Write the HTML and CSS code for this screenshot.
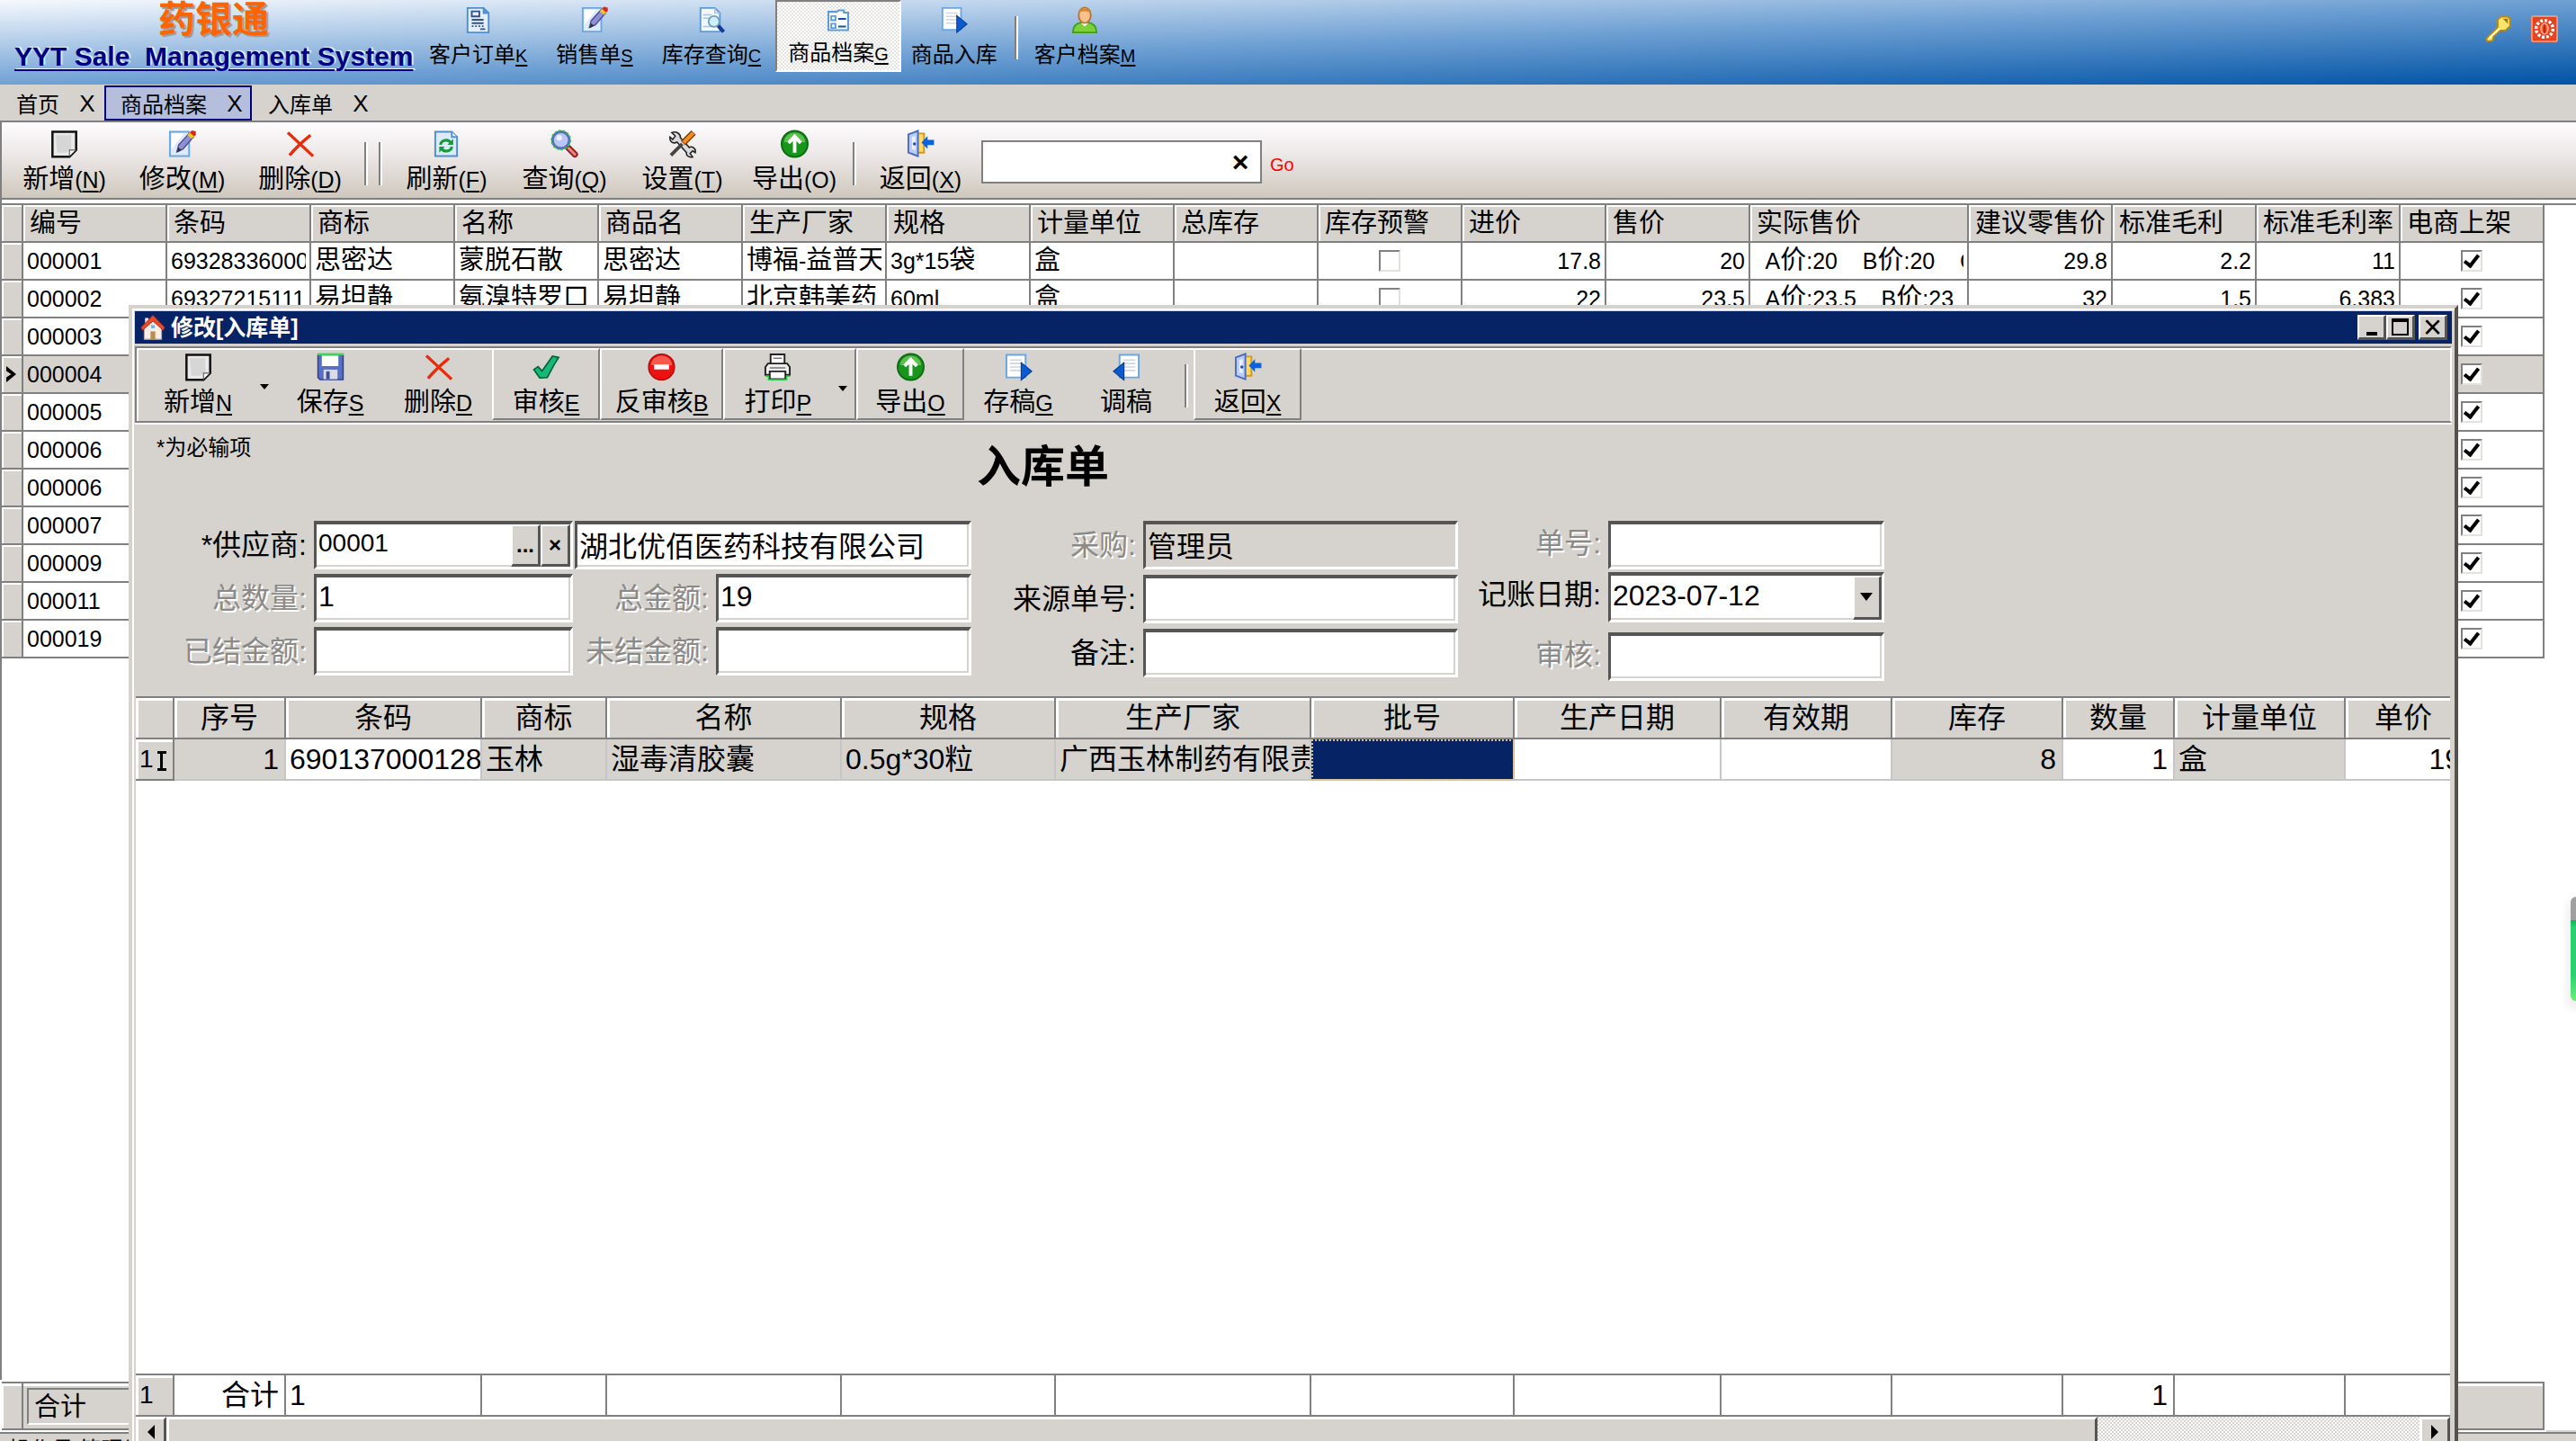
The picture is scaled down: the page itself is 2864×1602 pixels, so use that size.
FILE: index.html
```
<!DOCTYPE html>
<html lang="zh-CN">
<head>
    <meta charset="UTF-8">
    <meta name="viewport" content="width=device-width, initial-scale=1.0">
    <title>药银通</title>
    <link rel="stylesheet" href="styles.css">
</head>
<body>
    <!-- icon sprite -->
    <svg class="sprite" aria-hidden="true">
        <symbol id="i-order" viewBox="0 0 16 16">
            <path d="M1.500 1h9.500l3 3v11.500H1.500z" fill="#e3eefb" stroke="#4f8fd0"/>
            <path d="M11 1v3h3" fill="#4f9be0" stroke="#4f8fd0"/>
            <path d="M4 3h4.500v3H4zM4 8h7M4 10h7M9 13.500h3" fill="none" stroke="#34508f"/>
            <path d="M4 11.800h7" stroke="#34508f" stroke-dasharray="1 1"/>
        </symbol>
        <symbol id="i-edit" viewBox="0 0 16 16">
            <path d="M1 1h11v14H1z" fill="#dcebfb" stroke="#6aa7e0"/>
            <path d="M2 2h7L2 11z" fill="#fff"/>
            <path d="M5 12.500l1-4L12 2l2.500 2L8.500 11z" fill="#8f8fd8" stroke="#4c4c8a" stroke-width=".7"/>
            <path d="M5 13l.8-3 2 1.500z" fill="#333"/>
            <path d="M11 3l1.400-1.600 2.600 2L13.600 5z" fill="#f5c518"/>
            <path d="M12.400 1.500L13.500.3l2.300.5.1 2-1 .8z" fill="#d8261a"/>
        </symbol>
        <symbol id="i-find" viewBox="0 0 16 16">
            <path d="M1.500 1H10l3 3v11H1.500z" fill="#f2f7fc" stroke="#5d9bd3"/>
            <path d="M10 1v3h3M3 5h5M3 7h4M3 12h5" fill="none" stroke="#a9c4dd" stroke-width=".8"/>
            <circle cx="9.500" cy="9" r="3.200" fill="#cfeffc" stroke="#6f9fb8"/>
            <path d="M12 11.500l3.200 3.700" stroke="#143a9c" stroke-width="2.200"/>
        </symbol>
        <symbol id="i-list" viewBox="0 0 16 16">
            <path d="M1 2h6l1-1h4v1.500h3V15H1z" fill="#fff" stroke="#5b9bd8" stroke-width="1.300"/>
            <path d="M3 5h3v3H3zM3 10.500h3v3H3z" fill="none" stroke="#5b9bd8" stroke-width="1.200"/>
            <path d="M8 7h5.500M8 12.500h5.500" stroke="#1a4fa5" stroke-width="1.200"/>
        </symbol>
        <symbol id="i-in" viewBox="0 0 16 16">
            <path d="M1 1h11v13H1z" fill="#fff" stroke="#6aa7e0"/>
            <path d="M3 4h7M3 6h7M3 8h7M3 10h7" stroke="#cdd6df" stroke-width=".8"/>
            <path d="M9.500 5.500L15.500 10.500l-6 5z" fill="#0a5bd0" stroke="#063a94" stroke-width=".6"/>
        </symbol>
        <symbol id="i-back-doc" viewBox="0 0 16 16">
            <path d="M4 1h11v13H4z" fill="#fff" stroke="#6aa7e0"/>
            <path d="M6 4h7M6 6h7M6 8h7M6 10h7" stroke="#cdd6df" stroke-width=".8"/>
            <path d="M6.500 5.500L.5 10.500l6 5z" fill="#0a5bd0" stroke="#063a94" stroke-width=".6"/>
        </symbol>
        <symbol id="i-user" viewBox="0 0 16 16">
            <path d="M1 15.500c0-4 2-5.500 5-6h4c3 .5 5 2 5 6z" fill="#7ed03a" stroke="#3da01c"/>
            <path d="M6 10l2 2 2-2z" fill="#fff"/>
            <ellipse cx="8" cy="5.300" rx="3.600" ry="4.600" fill="#f7c08c" stroke="#b8742e"/>
            <path d="M4.500 4C5 .5 11 .5 11.500 4 10 2.500 6 2.500 4.500 4z" fill="#d78a35"/>
        </symbol>
        <symbol id="i-key" viewBox="0 0 16 16">
            <path d="M8 2.500L10 .8h4l1.300 1.400v4.300L12.500 9H9.500L5.500 12.500 5 15l-3 .5-1-1.500L8 7z" fill="#fbe36a" stroke="#b98a10"/>
            <path d="M11 2h3v3z" fill="#9a7a18"/>
            <path d="M3 13.500L9 8" stroke="#fffbd0" stroke-width="1"/>
        </symbol>
        <symbol id="i-power" viewBox="0 0 16 16">
            <rect x=".5" y=".5" width="15" height="15" rx="1" fill="#e6431e" stroke="#f2937c"/>
            <circle cx="8" cy="8" r="5" fill="none" stroke="#fff" stroke-width="1.800" stroke-dasharray="1.600 1"/>
            <ellipse cx="8" cy="8" rx="2" ry="3" fill="none" stroke="#ff9c80" stroke-width="1.200"/>
            <path d="M8 5.500v5" stroke="#b52a0c"/>
        </symbol>
        <symbol id="i-new" viewBox="0 0 16 16">
            <path d="M1.200 1h13.600v10.500L11 15.300H1.200z" fill="#e9e9e9" stroke="#111" stroke-width="1.300"/>
            <path d="M3 3h9v8l-3 2H4z" fill="#d6d6d6"/>
            <path d="M11 15v-3.500h3.500" fill="#fff" stroke="#777" stroke-width=".7"/>
        </symbol>
        <symbol id="i-del" viewBox="0 0 16 16">
            <path d="M1 1.500C4 4 10 10 15.500 15M14 3C9 7 5 11 2 14.500" fill="none" stroke="#ea2a08" stroke-width="1.700"/>
        </symbol>
        <symbol id="i-refresh" viewBox="0 0 16 16">
            <path d="M1.500 1H11l3 3v11H1.500z" fill="#dcebfb" stroke="#4f8fd0"/>
            <path d="M11 1v3h3" fill="#fff" stroke="#4f8fd0"/>
            <path d="M4.500 8.500C5 5.500 9 5 10.500 7.500M11 9.500c-.5 3-4.500 3.500-6 1" fill="none" stroke="#189a38" stroke-width="1.600"/>
            <path d="M11.800 5v3.500H8.500zM3.800 13V9.500H7z" fill="#189a38"/>
        </symbol>
        <symbol id="i-search" viewBox="0 0 16 16">
            <path d="M9.500 9.500l4.500 4.500" stroke="#8c1d1d" stroke-width="3.600" stroke-linecap="round"/>
            <path d="M10.500 10.500l3.500 3.500" stroke="#f08080" stroke-width="1.600" stroke-linecap="round"/>
            <circle cx="6" cy="5.800" r="4.800" fill="#b9c7f7" stroke="#5e68c0" stroke-width="1.500"/>
            <circle cx="6" cy="5.800" r="5.400" fill="none" stroke="#20d040" stroke-width="1" stroke-dasharray="1.200 1.200"/>
            <circle cx="5" cy="4.500" r="1.600" fill="#eef2ff"/>
        </symbol>
        <symbol id="i-tools" viewBox="0 0 16 16">
            <path d="M2 1.500l2 2-1.500 2-1.500-1.500C.5 7 3 8 5 7l5.500 6c-.5 2 2 3 3.500 2.500l-1.500-2 1.500-1.500 1.500 1C16 10.500 13.500 9 12 10L7 4.500C7 2 4.500.5 2 1.500z" fill="#d9d9d9" stroke="#222" stroke-width=".8"/>
            <path d="M1.500 14.500L8 8" stroke="#444" stroke-width="2"/>
            <path d="M8.500 7.500L14.500 1.500" stroke="#7c3a00" stroke-width="3.600"/>
            <path d="M8.800 7.200L14.300 1.700" stroke="#f58a1e" stroke-width="2.200"/>
        </symbol>
        <symbol id="i-export" viewBox="0 0 16 16">
            <circle cx="8" cy="8" r="7.500" fill="#18961c" stroke="#0c6d12"/>
            <path d="M2 7a6 5.500 0 0 1 12 0z" fill="#5cc04f"/>
            <path d="M8 13V4M4.500 7.500L8 3.700l3.500 3.800" fill="none" stroke="#fff" stroke-width="2"/>
        </symbol>
        <symbol id="i-exit" viewBox="0 0 16 16">
            <path d="M6 2h4v11H6z" fill="#ffd968" stroke="#d19a1e"/>
            <path d="M1 2.500L6.500.5v14.500L1 13z" fill="#b8ccf5" stroke="#4c6dbf"/>
            <path d="M3 4l2-.7v8.500L3 11z" fill="#e6eeff"/>
            <circle cx="4.500" cy="8" r=".9" fill="#2d4a9c"/>
            <path d="M8.500 7.200L12 3.500v2.200h3.700v3H12v2.200z" fill="#0b62dc"/>
        </symbol>
        <symbol id="i-home" viewBox="0 0 16 16">
            <path d="M2.500 7.500v8h11v-8L8 2z" fill="#f6efe8" stroke="#b9aaa0" stroke-width=".6"/>
            <path d="M3 2h2.200v4H3z" fill="#e8e8e8"/>
            <path d="M8 .3L.5 8l1 1.800L8 4l6.500 5.800 1-1.800z" fill="#e8492a" stroke="#b72a10" stroke-width=".5"/>
            <path d="M6.500 10.500h3v5h-3z" fill="#c08a4a"/>
            <path d="M6.800 6.500h2.400v2H6.800z" fill="#6db3e8"/>
        </symbol>
        <symbol id="i-save" viewBox="0 0 16 16">
            <path d="M.8.8h14.400v14.400H2L.8 14z" fill="#5a6fc4" stroke="#2f3f93" stroke-width=".8"/>
            <path d="M.5.700h15" stroke="#39d659" stroke-width="1.200"/>
            <path d="M3 1.500h9.500v6H3z" fill="#fff"/>
            <path d="M4 9.500h8V15H4z" fill="#d9dbe6"/>
            <path d="M5.500 10.500h2V15h-2z" fill="#3c4da0"/>
        </symbol>
        <symbol id="i-check" viewBox="0 0 16 16">
            <path d="M.8 9.500l2.400-1.700 2.300 2.500L11.500 1.800l3.500.7-2.500 4L8.500 14l-4.300.3z" fill="#17b87c" stroke="#063" stroke-width=".9"/>
        </symbol>
        <symbol id="i-stop" viewBox="0 0 16 16">
            <circle cx="8" cy="8" r="7.400" fill="#ee1111" stroke="#b50d0d" stroke-width=".8"/>
            <path d="M2 7a6 5.500 0 0 1 12 0z" fill="#f65a4c"/>
            <path d="M3.700 6.600h8.600v2.800H3.700z" fill="#fff"/>
        </symbol>
        <symbol id="i-print" viewBox="0 0 16 16">
            <path d="M4 6V.8h8V6" fill="#fff" stroke="#222"/>
            <path d="M2.500 6h11L15 8v4.500H1V8z" fill="#eee" stroke="#222"/>
            <path d="M3.500 10.500h9V15h-9z" fill="#fff" stroke="#222"/>
            <path d="M1 13.300h1.800v2h10.400v-2H15" fill="none" stroke="#2ecb4b" stroke-width=".8"/>
            <path d="M5.500 3h5M3.500 8.500h9" stroke="#777" stroke-width=".8"/>
        </symbol>
    </svg>

    <header class="topbar">
        <div class="brand">
            <h1 class="brand-name">药银通</h1>
            <a class="brand-link" href="#">YYT Sale&nbsp; Management System</a>
        </div>
        <nav class="nav">
            <button class="nav-btn"><svg><use href="#i-order"/></svg><span>客户订单<u>K</u></span></button>
            <button class="nav-btn"><svg><use href="#i-edit"/></svg><span>销售单<u>S</u></span></button>
            <button class="nav-btn"><svg><use href="#i-find"/></svg><span>库存查询<u>C</u></span></button>
            <button class="nav-btn pressed"><svg><use href="#i-list"/></svg><span>商品档案<u>G</u></span></button>
            <button class="nav-btn slim"><svg><use href="#i-in"/></svg><span>商品入库</span></button>
            <span class="nav-sep"></span>
            <button class="nav-btn"><svg><use href="#i-user"/></svg><span>客户档案<u>M</u></span></button>
        </nav>
        <div class="top-tools">
            <button aria-label="密码"><svg><use href="#i-key"/></svg></button>
            <button aria-label="退出"><svg><use href="#i-power"/></svg></button>
        </div>
    </header>

    <div class="tabs">
        <div class="tab"><a href="#">首页</a><button aria-label="关闭首页">X</button></div>
        <div class="tab active"><a href="#">商品档案</a><button aria-label="关闭商品档案">X</button></div>
        <div class="tab"><a href="#">入库单</a><button aria-label="关闭入库单">X</button></div>
    </div>

    <div class="toolbar">
        <button class="tool"><svg><use href="#i-new"/></svg><span>新增<small>(<u>N</u>)</small></span></button>
        <button class="tool"><svg><use href="#i-edit"/></svg><span>修改<small>(<u>M</u>)</small></span></button>
        <button class="tool"><svg><use href="#i-del"/></svg><span>删除<small>(<u>D</u>)</small></span></button>
        <span class="sep"></span><span class="sep"></span>
        <button class="tool"><svg><use href="#i-refresh"/></svg><span>刷新<small>(<u>F</u>)</small></span></button>
        <button class="tool"><svg><use href="#i-search"/></svg><span>查询<small>(<u>Q</u>)</small></span></button>
        <button class="tool"><svg><use href="#i-tools"/></svg><span>设置<small>(<u>T</u>)</small></span></button>
        <button class="tool snug"><svg><use href="#i-export"/></svg><span>导出<small>(O)</small></span></button>
        <span class="sep"></span>
        <button class="tool"><svg><use href="#i-exit"/></svg><span>返回<small>(<u>X</u>)</small></span></button>
        <div class="search">
            <input type="text" aria-label="搜索">
            <button aria-label="清空">×</button>
        </div>
        <a class="go" href="#">Go</a>
    </div>

    <main class="sheet">
        <table class="goods">
            <colgroup id="goodsCols"></colgroup>
            <thead><tr id="goodsHead"></tr></thead>
            <tbody id="goodsBody"></tbody>
        </table>
        <div class="goods-total"><i></i><b>合计</b></div>
    </main>
    <footer class="status">操作员:管理员</footer>

    <section class="dialog">
        <div class="titlebar">
            <svg><use href="#i-home"/></svg>
            <h2>修改[入库单]</h2>
            <button class="win-btn min" aria-label="最小化"></button>
            <button class="win-btn max" aria-label="最大化"></button>
            <button class="win-btn close" aria-label="关闭">×</button>
        </div>

        <div class="dlg-bar">
            <button class="dlg-tool"><svg><use href="#i-new"/></svg><span>新增<u>N</u></span></button>
            <button class="drop" aria-label="新增选项"></button>
            <button class="dlg-tool"><svg><use href="#i-save"/></svg><span>保存<u>S</u></span></button>
            <button class="dlg-tool"><svg><use href="#i-del"/></svg><span>删除<u>D</u></span></button>
            <button class="dlg-tool raised"><svg><use href="#i-check"/></svg><span>审核<u>E</u></span></button>
            <button class="dlg-tool raised wide"><svg><use href="#i-stop"/></svg><span>反审核<u>B</u></span></button>
            <div class="split raised">
                <button class="dlg-tool"><svg><use href="#i-print"/></svg><span>打印<u>P</u></span></button>
                <button class="drop" aria-label="打印选项"></button>
            </div>
            <button class="dlg-tool raised"><svg><use href="#i-export"/></svg><span>导出<u>O</u></span></button>
            <button class="dlg-tool"><svg><use href="#i-in"/></svg><span>存稿<u>G</u></span></button>
            <button class="dlg-tool"><svg><use href="#i-back-doc"/></svg><span>调稿</span></button>
            <span class="sep"></span>
            <button class="dlg-tool raised"><svg><use href="#i-exit"/></svg><span>返回<u>X</u></span></button>
        </div>

        <form class="form">
            <p class="hint">*为必输项</p>
            <h3 class="form-title">入库单</h3>

            <div class="group group-a">
                <label for="supplier">*供应商:</label>
                <div class="field code">
                    <input id="supplier" type="text" value="00001">
                    <button type="button" aria-label="选择供应商">...</button>
                    <button type="button" aria-label="清除供应商">×</button>
                </div>
                <input class="field name" type="text" aria-label="供应商名称" value="湖北优佰医药科技有限公司">
                <label class="off" for="qty">总数量:</label>
                <input class="field" id="qty" type="text" value="1">
                <label class="off" for="amount">总金额:</label>
                <input class="field" id="amount" type="text" value="19">
                <label class="off" for="paid">已结金额:</label>
                <input class="field" id="paid" type="text">
                <label class="off" for="unpaid">未结金额:</label>
                <input class="field" id="unpaid" type="text">
            </div>

            <div class="group group-b">
                <label class="off" for="buyer">采购:</label>
                <input class="field readonly" id="buyer" type="text" value="管理员" readonly>
                <label for="source">来源单号:</label>
                <input class="field" id="source" type="text">
                <label for="remark">备注:</label>
                <input class="field" id="remark" type="text">
            </div>

            <div class="group group-c">
                <label class="off" for="billno">单号:</label>
                <input class="field" id="billno" type="text">
                <label for="billdate">记账日期:</label>
                <div class="field combo">
                    <select id="billdate"><option>2023-07-12</option></select>
                </div>
                <label class="off" for="auditor">审核:</label>
                <input class="field" id="auditor" type="text">
            </div>
        </form>

        <div class="detail">
            <table class="lines">
                <colgroup class="line-cols">
                    <col class="w-mark"><col class="w-no"><col class="w-code"><col class="w-brand"><col class="w-name">
                    <col class="w-spec"><col class="w-maker"><col class="w-batch"><col class="w-made"><col class="w-stock">
                    <col class="w-stock"><col class="w-qty"><col class="w-stock"><col class="w-price">
                </colgroup>
                <thead>
                    <tr>
                        <th></th><th>序号</th><th>条码</th><th>商标</th><th>名称</th><th>规格</th><th>生产厂家</th>
                        <th>批号</th><th>生产日期</th><th>有效期</th><th>库存</th><th>数量</th><th>计量单位</th><th>单价</th>
                    </tr>
                </thead>
                <tbody>
                    <tr>
                        <td class="mark">1<i class="ibeam"></i></td>
                        <td class="lock num">1</td>
                        <td>690137000128</td>
                        <td class="lock">玉林</td>
                        <td class="lock">湿毒清胶囊</td>
                        <td class="lock">0.5g*30粒</td>
                        <td class="lock">广西玉林制药有限责</td>
                        <td class="picked"></td>
                        <td></td>
                        <td></td>
                        <td class="lock num">8</td>
                        <td class="num">1</td>
                        <td class="lock">盒</td>
                        <td class="num">19</td>
                    </tr>
                </tbody>
            </table>
            <table class="lines sum">
                <colgroup class="line-cols">
                    <col class="w-mark"><col class="w-no"><col class="w-code"><col class="w-brand"><col class="w-name">
                    <col class="w-spec"><col class="w-maker"><col class="w-batch"><col class="w-made"><col class="w-stock">
                    <col class="w-stock"><col class="w-qty"><col class="w-stock"><col class="w-price">
                </colgroup>
                <tbody>
                    <tr>
                        <td class="mark">1</td><td class="num">合计</td><td>1</td><td></td><td></td><td></td><td></td>
                        <td></td><td></td><td></td><td></td><td class="num">1</td><td></td><td></td>
                    </tr>
                </tbody>
            </table>
            <div class="scroll">
                <button class="left" aria-label="向左"></button>
                <span class="thumb"></span>
                <span class="track"></span>
                <button class="right" aria-label="向右"></button>
            </div>
        </div>
    </section>

    <div class="float-tab"></div>

    <script>
        const heads = ["编号", "条码", "商标", "名称", "商品名", "生产厂家", "规格", "计量单位", "总库存",
            "库存预警", "进价", "售价", "实际售价", "建议零售价", "标准毛利", "标准毛利率", "电商上架"];

        const goods = [
            ["000001", "69328336000", "思密达", "蒙脱石散", "思密达", "博福-益普天", "3g*15袋", "盒", "", false,
                "17.8", "20", "  A价:20    B价:20    C", "29.8", "2.2", "11", true],
            ["000002", "69327215111", "易坦静", "氨溴特罗口", "易坦静", "北京韩美药", "60ml", "盒", "", false,
                "22", "23.5", "  A价:23.5    B价:23", "32", "1.5", "6.383", true]
        ];
        ["000003", "000004", "000005", "000006", "000006", "000007", "000009", "000011", "000019"].forEach(no => {
            const row = new Array(17).fill("");
            row[0] = no;
            row[9] = false;
            row[16] = true;
            goods.push(row);
        });

        const rightCols = [10, 11, 13, 14, 15];

        document.getElementById("goodsCols").innerHTML =
            '<col class="c-mark">' + heads.map(h => h === "实际售价" ? '<col class="c-price">' : "<col>").join("");
        document.getElementById("goodsHead").innerHTML =
            "<th></th>" + heads.map(h => "<th>" + h + "</th>").join("");

        // latin text is set smaller than the chinese text around it
        function mixed(text) {
            return text.replace(/[\x20-\x7e]+/g, m => "<small>" + m + "</small>");
        }

        document.getElementById("goodsBody").innerHTML = goods.map(row => {
            const current = row[0] === "000004";
            const cells = row.map((v, i) => {
                if (typeof v === "boolean") {
                    return '<td class="tick"><input type="checkbox" aria-label="' + heads[i] + '"' + (v ? " checked" : "") + "></td>";
                }
                return "<td" + (rightCols.includes(i) ? ' class="num"' : "") + "><div>" + mixed(v) + "</div></td>";
            }).join("");
            return "<tr" + (current ? ' class="current"' : "") + '><td class="mark"></td>' + cells + "</tr>";
        }).join("");
    </script>
</body>
</html>
```
FILE: styles.css
```
*,
*::before,
*::after {
    box-sizing: border-box;
}

body {
    margin: 0;
    height: 100vh;
    display: flex;
    flex-direction: column;
    position: relative;
    overflow: hidden;
    background: #d6d3ce;
    color: #000;
    font-family: "Liberation Sans", "Noto Sans CJK SC", sans-serif;
    font-size: 29px;
}

h1, h2, h3, p {
    margin: 0;
}

button, input, select {
    font: inherit;
    color: inherit;
    margin: 0;
    padding: 0;
    border: 0;
    border-radius: 0;
    background: none;
}

button {
    cursor: pointer;
    white-space: nowrap;
}

a {
    color: inherit;
    text-decoration: none;
}

u {
    text-decoration-thickness: 2px;
    text-underline-offset: 3px;
}

small {
    font-size: 25px;
    white-space: pre;
}

.sprite {
    position: absolute;
    width: 0;
    height: 0;
}

/* top bar */
.topbar {
    height: 94px;
    flex: none;
    display: flex;
    background: linear-gradient(to bottom right, #f6f9fe, #70a1d4 50%, #0053a6);
}

.brand {
    width: 461px;
    padding-left: 16px;
    line-height: 38px;
}

.brand-name {
    padding-left: 160px;
    color: #ff6400;
    font-size: 41px;
    line-height: 44px;
    text-shadow: 2px 2px 1px #999;
}

.brand-link {
    color: #000084;
    font-size: 30px;
    font-weight: bold;
    text-decoration: underline;
    text-decoration-thickness: 2px;
    text-underline-offset: 4px;
    text-shadow: 2px -1px 1px #e8f0fa;
}

.nav {
    display: flex;
    align-items: flex-start;
    font-size: 24px;
}

.nav-btn {
    display: flex;
    flex-direction: column;
    align-items: center;
    gap: 6px;
    height: 80px;
    padding: 7px 16px 0;
    line-height: 36px;
}

.nav-btn.slim {
    padding: 7px 11px 0;
}

.nav-btn svg {
    width: 30px;
    height: 30px;
}

.nav-btn u {
    font-size: 20px;
}

.nav-btn.pressed {
    padding: 8px 12px 0;
    border: 2px solid #fff;
    border-top-color: #808080;
    border-left-color: #808080;
    background: repeating-conic-gradient(#fff 0 25%, #e6e4e0 0 50%) 0 0 / 4px 4px;
}

.nav-sep {
    width: 4px;
    height: 48px;
    margin: 18px 2px 0 8px;
    border-left: 2px solid #808080;
    border-right: 2px solid #fff;
}

.top-tools {
    margin-left: auto;
    padding: 17px 20px 0 0;
    display: flex;
    align-items: flex-start;
    gap: 22px;
}

.top-tools svg {
    display: block;
    width: 30px;
    height: 30px;
}

/* page tabs */
.tabs {
    height: 42px;
    flex: none;
    display: flex;
    padding-top: 1px;
    font-size: 24px;
    border-bottom: 2px solid #808080;
}

.tab {
    display: flex;
    align-items: center;
    gap: 20px;
    padding: 0 8px 0 18px;
    height: 39px;
}

.tab.active {
    padding: 0 6px 0 16px;
    border: 2px solid #000084;
    background: #b5bedb;
}

.tab button {
    width: 22px;
    font-size: 26px;
    line-height: 30px;
}

/* main toolbar */
.toolbar {
    height: 92px;
    flex: none;
    display: flex;
    padding-left: 4px;
    border-left: 2px solid #808080;
    border-bottom: 2px solid #808080;
    background: linear-gradient(#fefcfe, #efebeb 35%, #dcd6d0 70%, #cec7bd 84px, #808080 84px, #808080 86px, #fff 86px);
}

.tool {
    width: 131px;
    height: 84px;
    display: flex;
    flex-direction: column;
    align-items: center;
    gap: 4px;
    padding-top: 8px;
    line-height: 38px;
}

.tool.snug {
    width: 118px;
}

.tool svg,
.dlg-tool svg {
    width: 31px;
    height: 32px;
    flex: none;
}

.sep {
    width: 4px;
    height: 48px;
    margin: 22px 6px 0;
    border-left: 2px solid #808080;
    border-right: 2px solid #fff;
}

.search {
    width: 312px;
    height: 48px;
    margin: 20px 9px 0 2px;
    display: flex;
    border: 2px solid #808080;
    background: #fff;
}

.search input {
    flex: 1;
    min-width: 0;
}

.search button {
    width: 44px;
    font-size: 32px;
    font-weight: bold;
    line-height: 40px;
}

.go {
    color: #f00;
    font-size: 20px;
    line-height: 94px;
}

/* goods list */
.sheet {
    flex: 1;
    min-height: 0;
    display: flex;
    flex-direction: column;
    justify-content: space-between;
    border-left: 2px solid #808080;
    background: #fff;
}

.goods {
    width: calc(100% - 35px);
    table-layout: fixed;
    border-collapse: separate;
    border-spacing: 0;
}

.c-mark {
    width: 24px;
}

.c-price {
    width: 243px;
}

.goods th {
    height: 42px;
    padding: 0 0 0 7px;
    text-align: left;
    font-weight: normal;
    line-height: 36px;
    white-space: nowrap;
    overflow: hidden;
    border-right: 2px solid #808080;
    border-bottom: 2px solid #808080;
    background: #d6d3ce;
    box-shadow: inset 2px 2px #fff;
}

.goods td {
    height: 42px;
    padding: 0 4px;
    line-height: 38px;
    white-space: nowrap;
    border-right: 2px solid #808080;
    border-bottom: 2px solid #808080;
}

.goods td div {
    height: 40px;
    overflow: hidden;
}

.goods .num {
    text-align: right;
}

.goods .current td {
    background: #d6d3ce;
}

.goods td.mark {
    padding: 0 5px;
    background: #d6d3ce;
    box-shadow: inset 2px 2px #fff;
}

.current .mark::before {
    content: "";
    display: block;
    width: 11px;
    height: 18px;
    background: #000;
    clip-path: polygon(0 0, 100% 50%, 0 100%, 0 70%, 50% 50%, 0 30%);
}

.goods .tick {
    text-align: center;
    line-height: 0;
}

.tick input {
    appearance: none;
    width: 24px;
    height: 24px;
    position: relative;
    background: #fff;
    border: 2px solid #e4e1dc;
    border-top-color: #808080;
    border-left-color: #808080;
}

.tick input:checked::after {
    content: "";
    position: absolute;
    left: 5px;
    top: 0;
    width: 10px;
    height: 17px;
    border: solid #000;
    border-width: 0 4px 4px 0;
    transform: rotate(38deg);
}

.goods-total {
    width: calc(100% - 35px);
    height: 54px;
    display: flex;
    gap: 4px;
    border: 2px solid #808080;
    border-left: 0;
    background: #d6d3ce;
    box-shadow: inset 0 3px #fff, 0 0 0 2px #fff;
}

.goods-total i {
    width: 24px;
    border-right: 2px solid #808080;
    box-shadow: inset 2px 2px #fff;
}

.goods-total b {
    width: 156px;
    margin: 5px 0 4px;
    padding-left: 6px;
    font-weight: normal;
    line-height: 38px;
    border: 2px solid #808080;
    border-right-color: #fff;
    border-bottom-color: #fff;
}

.status {
    height: 10px;
    flex: none;
    margin-top: 2px;
    padding: 0 10px;
    overflow: hidden;
    font-size: 24px;
    line-height: 36px;
    border-top: 2px solid #808080;
}

/* document window */
.dialog {
    position: absolute;
    left: 143px;
    right: 131px;
    top: 339px;
    bottom: -17px;
    display: flex;
    flex-direction: column;
    padding: 3px 3px 0 3px;
    border: 4px solid #d6d3ce;
    border-right: 4px solid #55524e;
    background: #d6d3ce;
    box-shadow: inset 2px 2px #fff;
    font-size: 32px;
}

.titlebar {
    height: 36px;
    flex: none;
    display: flex;
    align-items: center;
    padding: 0 5px 0 6px;
    background: #062366;
    color: #fff;
}

.titlebar svg {
    width: 28px;
    height: 32px;
}

.titlebar h2 {
    margin: 0 auto 0 6px;
    font-size: 25px;
    line-height: 34px;
}

.win-btn {
    width: 32px;
    height: 28px;
    display: flex;
    align-items: center;
    justify-content: center;
    color: #000;
    font-size: 36px;
    line-height: 20px;
    background: #d6d3ce;
    border: 2px solid #fff;
    border-right: 3px solid #555;
    border-bottom: 3px solid #555;
}

.win-btn.close {
    margin-left: 4px;
}

.win-btn.min::before {
    content: "";
    width: 12px;
    height: 4px;
    margin-top: 14px;
    background: #000;
}

.win-btn.max::before {
    content: "";
    width: 19px;
    height: 19px;
    border: 2px solid #000;
    border-top-width: 4px;
}

.dlg-bar {
    height: 85px;
    flex: none;
    display: flex;
    margin-top: 3px;
    padding-left: 8px;
    border: 2px solid #808080;
    border-right-color: #fff;
    box-shadow: inset 2px 2px #fff, 0 2px #fff;
    font-size: 29px;
}

.dlg-tool {
    width: 120px;
    height: 80px;
    display: flex;
    flex-direction: column;
    align-items: center;
    gap: 4px;
    padding-top: 5px;
    line-height: 38px;
}

.dlg-tool.wide {
    width: 137px;
}

.dlg-tool u {
    font-size: 25px;
}

.raised {
    border: 2px solid #fff;
    border-right-color: #808080;
    border-bottom-color: #808080;
    padding-top: 3px;
}

.split {
    display: flex;
    width: 148px;
    height: 80px;
    padding-top: 0;
}

.split .dlg-tool {
    padding-top: 3px;
}

.drop {
    width: 27px;
    height: 80px;
}

.drop::before {
    content: "";
    display: block;
    width: 10px;
    margin: 6px auto 0;
    border: 5px solid transparent;
    border-top: 6px solid #000;
    border-bottom: 0;
}

.dlg-bar .sep {
    margin: 18px 6px 0 5px;
}

/* entry form */
.form {
    flex: none;
    display: grid;
    grid-template-columns: 930fr 541fr 474fr 631fr;
    grid-template-rows: 109px 195px;
}

.hint {
    padding: 10px 0 0 24px;
    font-size: 24px;
    line-height: 36px;
}

.form-title {
    grid-column: 2 / 5;
    padding: 14px 0 0 6px;
    font-size: 49px;
    line-height: 70px;
}

.group {
    grid-row: 2;
    display: grid;
    align-content: start;
    align-items: center;
    column-gap: 8px;
}

.group-a {
    grid-template-columns: 191px 288fr 143px 284fr;
    row-gap: 5px;
}

.group-b {
    grid-template-columns: 183px 1fr;
    row-gap: 6px;
}

.group-c {
    grid-template-columns: 159px 1fr;
    grid-template-rows: 57px 67px 54px;
    align-items: start;
}

.group label {
    text-align: right;
    white-space: nowrap;
    line-height: 50px;
}

.group label.off {
    color: #8c8a88;
    text-shadow: 2px 2px #fff;
}

.field {
    width: 100%;
    min-width: 0;
    height: 54px;
    padding: 0 2px 4px;
    background: #fff;
    border: 3px solid #fff;
    border-top: 4px solid #555;
    border-left-color: #555;
    box-shadow: inset -2px -2px #d6d3ce;
}

.field.name {
    grid-column: 3 / 5;
    width: auto;
    margin-left: -6px;
}

.field.readonly {
    background: #d6d3ce;
}

.code {
    display: flex;
    padding: 0 0 0 2px;
    font-size: 28px;
}

.code input {
    flex: 1;
    min-width: 0;
    padding-bottom: 6px;
}

.code button {
    width: 33px;
    font-size: 24px;
    font-weight: bold;
    line-height: 30px;
    background: #d6d3ce;
    border: 2px solid #fff;
    border-right: 3px solid #555;
    border-bottom: 3px solid #555;
}

.combo {
    position: relative;
    padding: 0 0 0 2px;
    height: 56px;
}

.combo select {
    appearance: none;
    width: 100%;
    height: 44px;
}

.combo::before {
    content: "";
    position: absolute;
    right: 0;
    top: 0;
    bottom: 0;
    width: 32px;
    background: #d6d3ce;
    border: 2px solid #fff;
    border-right: 3px solid #555;
    border-bottom: 3px solid #555;
    pointer-events: none;
}

.combo::after {
    content: "";
    position: absolute;
    right: 10px;
    top: 19px;
    border: 7px solid transparent;
    border-top: 9px solid #000;
    border-bottom: 0;
    pointer-events: none;
}

/* document lines */
.detail {
    flex: 1;
    min-height: 0;
    display: flex;
    flex-direction: column;
    margin: 0 2px 0 1px;
    overflow: hidden;
    background: #fff;
}

.lines {
    width: 2587px;
    table-layout: fixed;
    border-collapse: separate;
    border-spacing: 0;
    border-top: 2px solid #808080;
}

.w-mark { width: 43px; }
.w-no { width: 124px; }
.w-code { width: 218px; }
.w-brand { width: 139px; }
.w-name { width: 261px; }
.w-spec { width: 238px; }
.w-maker { width: 284px; }
.w-batch { width: 226px; }
.w-made { width: 230px; }
.w-stock { width: 190px; }
.w-qty { width: 124px; }
.w-price { width: 130px; }

.lines th {
    height: 46px;
    padding: 0;
    font-weight: normal;
    line-height: 42px;
    border-right: 2px solid #808080;
    border-bottom: 2px solid #808080;
    background: #d6d3ce;
    box-shadow: inset 3px 3px #fff;
}

.lines td {
    height: 46px;
    padding: 0 6px 0 4px;
    line-height: 42px;
    white-space: nowrap;
    overflow: hidden;
    border-right: 2px solid #c6c6c6;
    border-bottom: 2px solid #c6c6c6;
}

.lines td:last-child {
    padding-right: 0;
}

.lines td.lock {
    background: #d6d3ce;
}

.lines td.num {
    text-align: right;
}

.lines td.picked {
    background: #062366;
    outline: 2px dotted #e0c070;
    outline-offset: -2px;
}

.lines td.mark {
    background: #d6d3ce;
    box-shadow: inset 3px 3px #fff;
    border-color: #808080;
    font-size: 28px;
}

.ibeam {
    display: inline-block;
    width: 10px;
    height: 22px;
    margin-left: 4px;
    vertical-align: middle;
    background:
        linear-gradient(#000, #000) 50% 0 / 10px 3px no-repeat,
        linear-gradient(#000, #000) 50% 100% / 10px 3px no-repeat,
        linear-gradient(#000, #000) 50% 50% / 3px 100% no-repeat;
}

.lines.sum {
    margin-top: auto;
}

.lines.sum td {
    border-color: #808080;
}

.scroll {
    height: 40px;
    flex: none;
    display: flex;
    background: #d6d3ce;
}

.scroll button,
.thumb {
    background: #d6d3ce;
    border: 3px solid #fff;
    border-right-color: #555;
    border-bottom-color: #555;
}

.scroll button {
    width: 34px;
    padding-top: 6px;
    display: flex;
    align-items: flex-start;
    justify-content: center;
}

.scroll button::before {
    content: "";
    border: 8px solid transparent;
}

.scroll .left::before {
    border-left: 0;
    border-right-color: #000;
}

.scroll .right::before {
    border-right: 0;
    border-left-color: #000;
}

.thumb {
    flex: 2150;
}

.track {
    flex: 359;
    background: repeating-conic-gradient(#fff 0 25%, #d6d3ce 0 50%) 0 0 / 4px 4px;
}

/* floating handle on the screen edge */
.float-tab {
    position: absolute;
    right: 0;
    top: 997px;
    width: 6px;
    height: 116px;
    border-radius: 6px 0 0 6px;
    background: linear-gradient(#a0a0a0 26px, #12b25c 26px, #2bd070 34px, #2bd070 75%, #6bef78);
    box-shadow: 0 6px 8px 4px #f1eef1;
}
```
